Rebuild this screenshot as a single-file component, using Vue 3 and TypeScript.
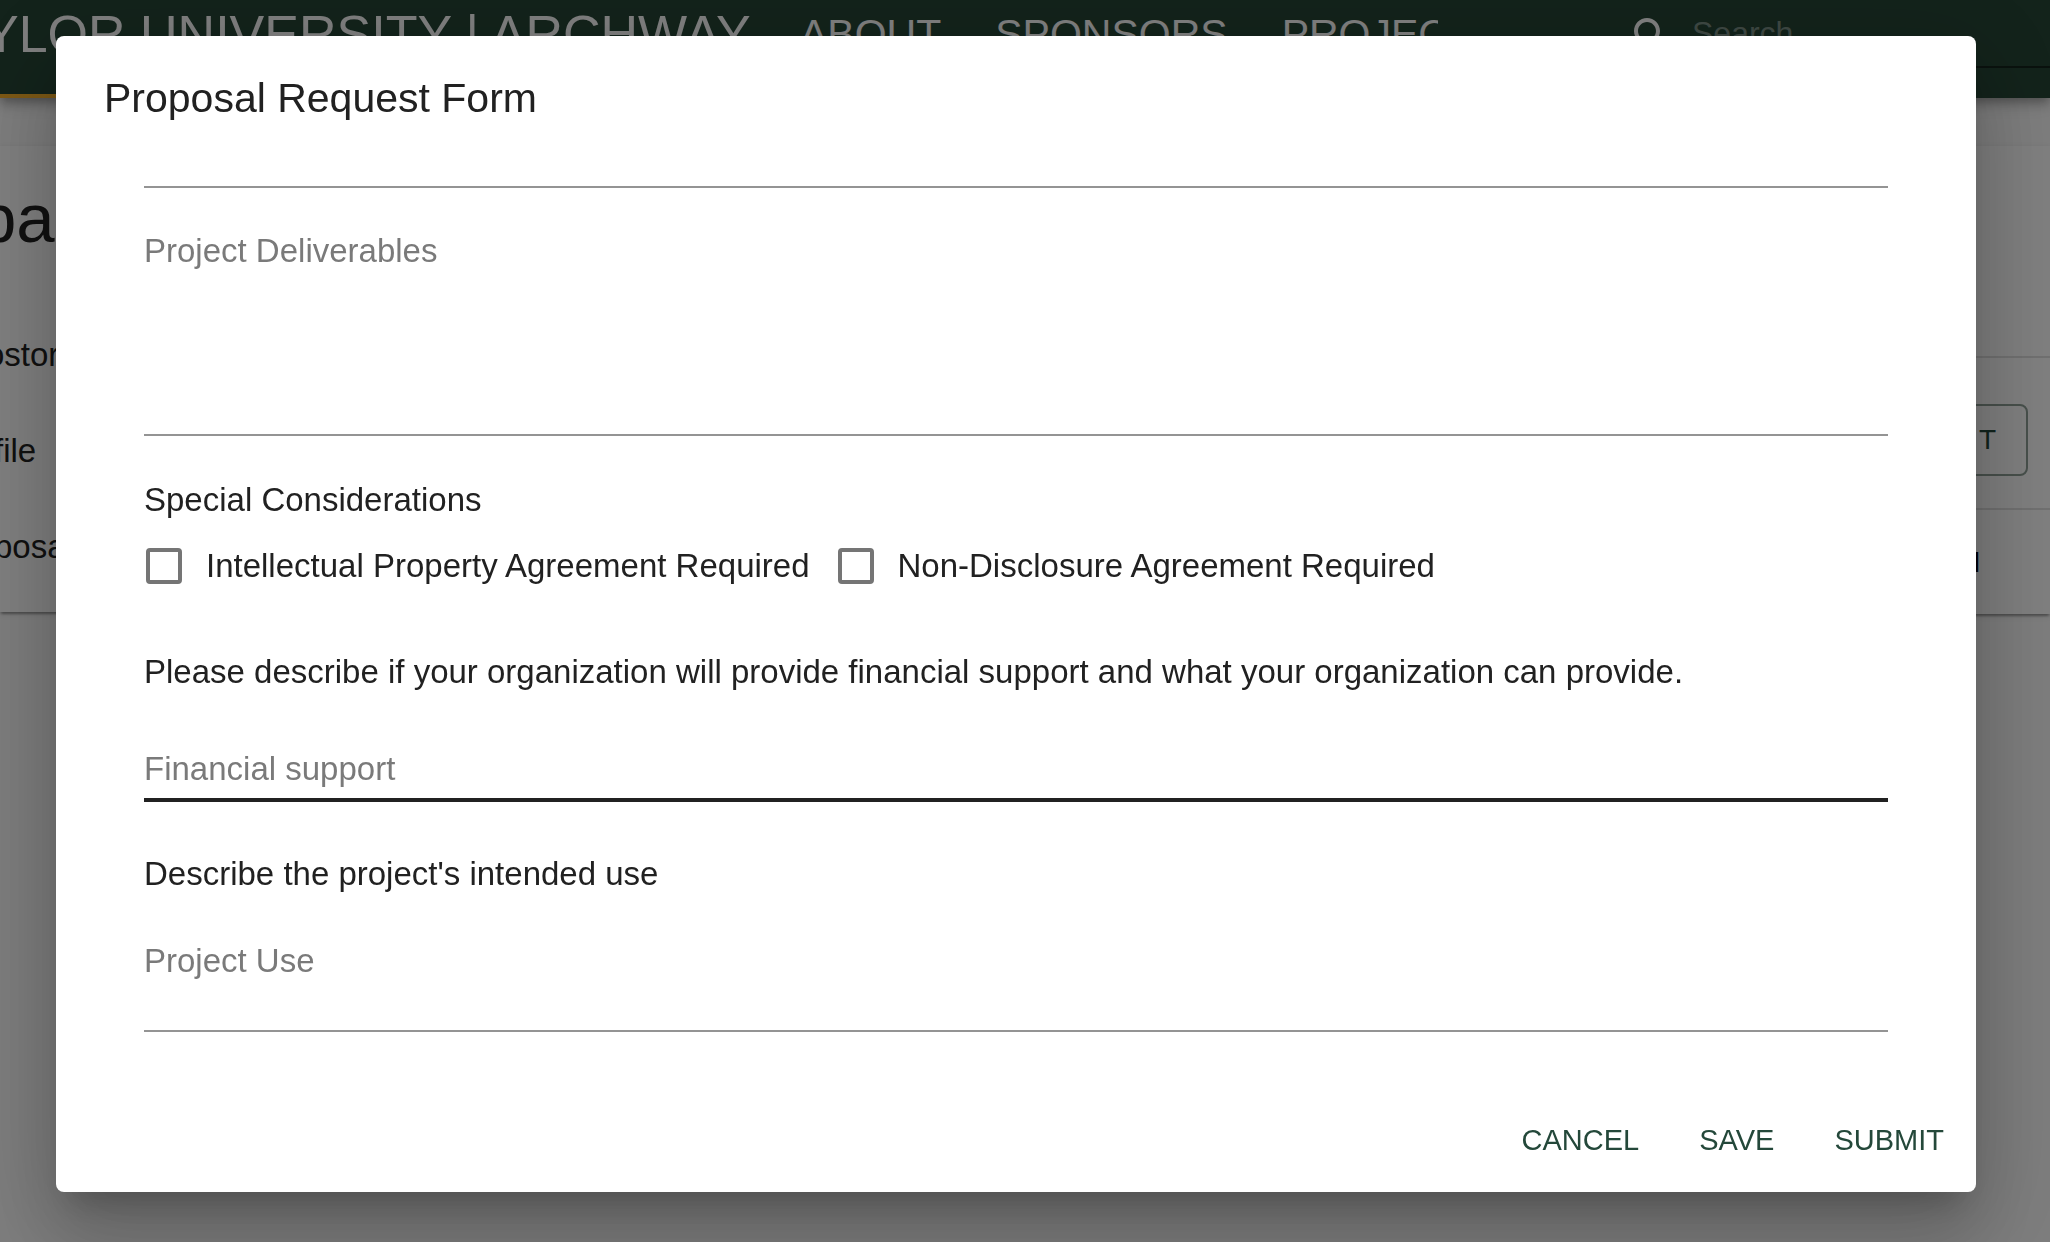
<script setup lang="ts">
import { ref } from 'vue'

const navLinks = ['ABOUT', 'SPONSORS', 'PROJEC']
const sideItems = ['ostor', 'file', 'posa']
const actions = ['CANCEL', 'SAVE', 'SUBMIT']

const deliverables = ref('')
const support = ref('')
const projectUse = ref('')
const ipRequired = ref(false)
const ndaRequired = ref(false)
</script>

<template>
  <div class="app">
    <div class="page">
      <header class="bar">
        <a href="#" class="brand">YLOR UNIVERSITY | ARCHWAY</a>
        <nav class="nav">
          <a v-for="link in navLinks" :key="link" href="#">{{ link }}</a>
        </nav>
        <div class="search">
          <svg viewBox="0 0 24 24" width="48" height="48" aria-hidden="true">
            <path
              fill="currentColor"
              d="M15.5 14h-.79l-.28-.27C15.41 12.59 16 11.11 16 9.5 16 5.91 13.09 3 9.5 3S3 5.91 3 9.5 5.91 16 9.5 16c1.61 0 3.09-.59 4.23-1.57l.27.28v.79l5 4.99L20.49 19l-4.99-5zm-6 0C7.01 14 5 11.99 5 9.5S7.01 5 9.5 5 14 7.01 14 9.5 11.99 14 9.5 14z"
            />
          </svg>
          <input type="text" placeholder="Search" aria-label="Search" />
        </div>
      </header>
      <div class="columns">
        <aside class="card side">
          <h1>pa</h1>
          <ul>
            <li v-for="item in sideItems" :key="item">{{ item }}</li>
          </ul>
        </aside>
        <section class="card main">
          <table>
            <tbody>
              <tr class="head"><td></td></tr>
              <tr class="row"><td><button type="button" class="outlined">T</button></td></tr>
              <tr class="last"><td>l</td></tr>
            </tbody>
          </table>
        </section>
      </div>
    </div>

    <div class="backdrop">
      <div class="dialog" role="dialog" aria-labelledby="dialog-title">
        <h2 id="dialog-title">Proposal Request Form</h2>
        <form class="content" @submit.prevent>
          <div class="previous"></div>
          <textarea
            v-model="deliverables"
            class="field deliverables"
            placeholder="Project Deliverables"
            aria-label="Project Deliverables"
          ></textarea>
          <p id="considerations" class="considerations">Special Considerations</p>
          <div class="checks" role="group" aria-labelledby="considerations">
            <label><input v-model="ipRequired" type="checkbox" />Intellectual Property Agreement Required</label>
            <label><input v-model="ndaRequired" type="checkbox" />Non-Disclosure Agreement Required</label>
          </div>
          <label class="prompt" for="support">Please describe if your organization will provide financial support and what your organization can provide.</label>
          <input id="support" v-model="support" class="field support" type="text" placeholder="Financial support" />
          <label class="prompt" for="use">Describe the project's intended use</label>
          <textarea id="use" v-model="projectUse" class="field use" placeholder="Project Use"></textarea>
        </form>
        <div class="actions">
          <button v-for="action in actions" :key="action" type="button">{{ action }}</button>
        </div>
      </div>
    </div>
  </div>
</template>

<style>
body {
  margin: 0;
  overflow: hidden;
}
</style>

<style scoped>
.app,
.app * {
  box-sizing: border-box;
}
.app {
  height: 100vh;
  overflow: hidden;
  background: #fafafa;
  color: #212121;
  font-family: 'Liberation Sans', Arial, Helvetica, sans-serif;
  font-size: 33px;
  line-height: 48px;
}
button,
input,
textarea {
  font-family: inherit;
}
.page {
  overflow: hidden;
}
.bar {
  position: relative;
  display: flex;
  align-items: flex-start;
  height: 98px;
  background: #264636;
  box-shadow: 0 4px 8px -2px rgba(0, 0, 0, 0.2), 0 8px 10px rgba(0, 0, 0, 0.14), 0 2px 20px rgba(0, 0, 0, 0.12);
  color: #fff;
}
.brand {
  flex: none;
  width: 800px;
  height: 98px;
  margin-left: -16px;
  padding-top: 4px;
  border-bottom: 4px solid #f8b02a;
  color: inherit;
  font-size: 52px;
  line-height: 60px;
  text-decoration: none;
  white-space: nowrap;
}
.nav {
  display: flex;
  flex: none;
  width: 654px;
  gap: 54px;
  padding: 10px 0 0 16px;
  overflow: hidden;
}
.nav a {
  color: inherit;
  font-size: 41px;
  text-decoration: none;
}
.search {
  display: flex;
  flex: 1;
  align-items: flex-start;
  gap: 16px;
  height: 68px;
  margin-left: 190px;
  border-bottom: 2px solid #14241c;
}
.search svg {
  flex: none;
  margin-top: 12px;
}
.search input {
  width: 100%;
  min-width: 0;
  height: 66px;
  padding: 0;
  border: 0;
  background: none;
  color: inherit;
  font-size: 32px;
}
.search input::placeholder {
  color: #7c9086;
  opacity: 1;
}
.columns {
  display: flex;
  align-items: flex-start;
  gap: 48px;
  padding: 48px 0;
}
.card {
  background: #fff;
  box-shadow: 0 4px 2px -2px rgba(0, 0, 0, 0.2), 0 2px 2px rgba(0, 0, 0, 0.14), 0 2px 6px rgba(0, 0, 0, 0.12);
}
.side {
  width: 25%;
  height: 466px;
}
.side h1 {
  margin: 0 0 0 -22px;
  padding: 33px 0 48px;
  font-size: 69px;
  font-weight: 400;
  line-height: 80px;
}
.side ul {
  margin: 0 0 0 -6px;
  padding: 0;
  list-style: none;
}
.side li {
  height: 96px;
  padding-top: 24px;
}
.side li:first-child {
  text-indent: -8px;
}
.main {
  flex: 1;
}
.main table {
  width: 100%;
  border-collapse: separate;
  border-spacing: 0;
}
.main td {
  padding: 0;
  font-size: 28px;
  line-height: 40px;
  text-align: right;
}
.head td {
  height: 212px;
  border-bottom: 2px solid #e0e0e0;
}
.main .row td {
  height: 152px;
  padding: 46px 22px 0 0;
  border-bottom: 2px solid #e0e0e0;
  vertical-align: top;
}
.main .last td {
  height: 104px;
  padding: 2px 70px 0 0;
  color: #000;
}
.outlined {
  display: block;
  height: 72px;
  margin-left: auto;
  padding: 0 30px;
  border: 2px solid #8fa097;
  border-radius: 8px;
  background: none;
  color: #24483a;
  font-size: 28px;
}
.backdrop {
  position: fixed;
  inset: 0;
  display: flex;
  padding: 36px 74px 50px 56px;
  background: rgba(0, 0, 0, 0.5);
}
.dialog {
  display: flex;
  flex: 1;
  flex-direction: column;
  border-radius: 8px;
  background: #fff;
  box-shadow: 0 22px 30px -14px rgba(0, 0, 0, 0.2), 0 48px 76px 6px rgba(0, 0, 0, 0.14), 0 18px 92px 16px rgba(0, 0, 0, 0.12);
}
.dialog h2 {
  margin: 0;
  padding: 30px 48px 18px;
  font-size: 41px;
  font-weight: 400;
  line-height: 64px;
}
.content {
  display: flex;
  flex: 1;
  flex-direction: column;
  padding: 0 88px;
}
.previous {
  height: 40px;
  border-bottom: 2px solid #949494;
}
.field {
  display: block;
  width: 100%;
  border: 0;
  border-bottom: 2px solid #949494;
  border-radius: 0;
  background: none;
  color: inherit;
  font-size: 33px;
  line-height: 38px;
  resize: none;
  outline: none;
}
.field::placeholder {
  color: #7a7a7a;
  opacity: 1;
}
.deliverables {
  height: 248px;
  padding: 44px 0 12px;
}
.considerations {
  margin: 40px 0 8px;
}
.checks {
  display: flex;
  height: 68px;
  gap: 26px;
}
.checks label {
  display: flex;
  align-items: center;
  gap: 24px;
}
.checks input {
  width: 36px;
  height: 36px;
  margin: 0 0 0 2px;
  border: 4px solid #757575;
  border-radius: 4px;
  background: #fff;
  appearance: none;
}
.checks input:checked {
  background: #24483a;
}
.prompt {
  margin-top: 48px;
}
.support {
  height: 66px;
  margin-top: 40px;
  padding: 4px 0 0;
  border-bottom: 4px solid #212121;
}
.use {
  height: 102px;
  margin-top: 32px;
  padding: 12px 0;
}
.actions {
  display: flex;
  justify-content: flex-end;
  gap: 36px;
  padding: 16px 20px 16px 16px;
}
.actions button {
  height: 72px;
  padding: 0 12px;
  border: 0;
  background: none;
  color: #24483a;
  font-size: 29px;
}
</style>
